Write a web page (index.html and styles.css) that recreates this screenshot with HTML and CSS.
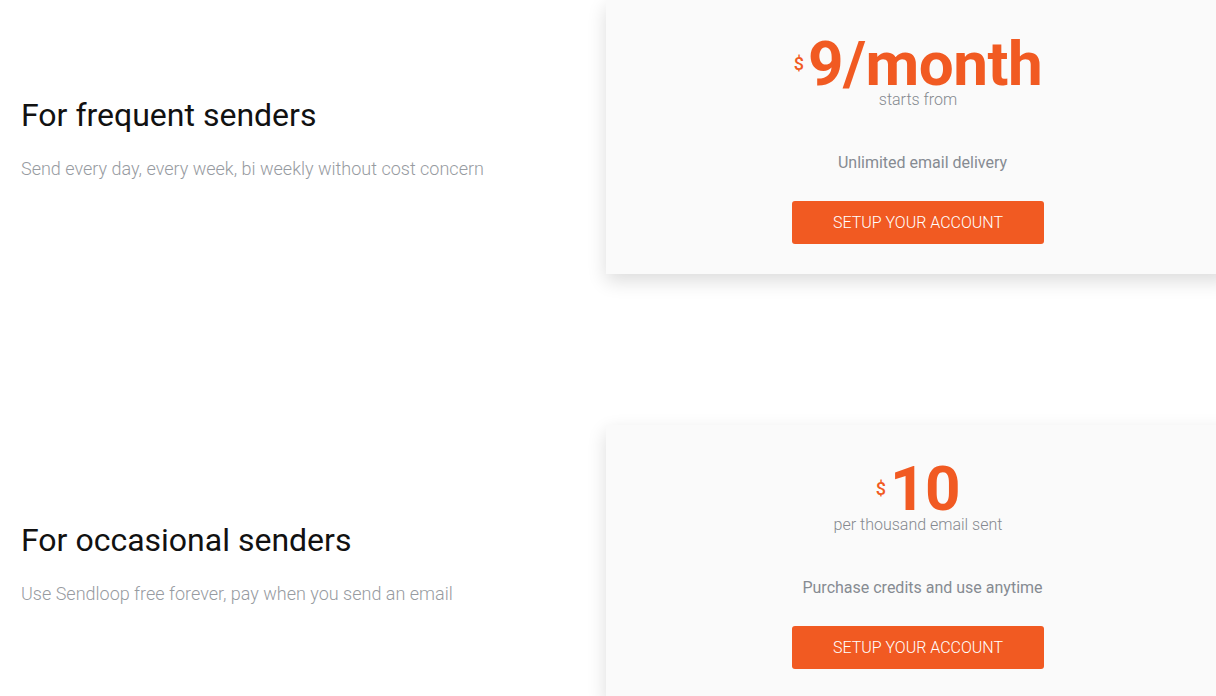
FILE: index.html
```html
<!DOCTYPE html>
<html lang="en">
<head>
<meta charset="utf-8">
<title>Pricing</title>
<link rel="stylesheet" href="styles.css">
</head>
<body>
<main class="plans">
  <section class="plan">
    <div class="plan-info">
      <h2 class="plan-title">For frequent senders</h2>
      <p class="plan-desc">Send every day, every week, bi weekly without cost concern</p>
    </div>
    <div class="card">
      <div class="price"><span class="currency">$</span><span class="amount">9/month</span></div>
      <div class="price-note">starts from</div>
      <div class="feature">Unlimited email delivery</div>
      <a class="btn" href="#">SETUP YOUR ACCOUNT</a>
    </div>
  </section>
  <section class="plan">
    <div class="plan-info">
      <h2 class="plan-title">For occasional senders</h2>
      <p class="plan-desc">Use Sendloop free forever, pay when you send an email</p>
    </div>
    <div class="card">
      <div class="price"><span class="currency">$</span><span class="amount">10</span></div>
      <div class="price-note">per thousand email sent</div>
      <div class="feature">Purchase credits and use anytime</div>
      <a class="btn" href="#">SETUP YOUR ACCOUNT</a>
    </div>
  </section>
</main>
</body>
</html>
```

FILE: styles.css
```css
html, body {
  margin: 0;
  padding: 0;
  background: #ffffff;
  overflow: hidden;
}

body {
  font-family: Roboto, "Liberation Sans", Arial, sans-serif;
  width: 1216px;
  height: 696px;
}

.plans {
  display: flex;
  flex-direction: column;
  gap: 151px;
}

.plan {
  display: flex;
  align-items: stretch;
  height: 274px;
}

.plan-info {
  width: 606px;
  flex: none;
  box-sizing: border-box;
  padding: 3px 0 0 21px;
  display: flex;
  flex-direction: column;
  justify-content: center;
}

.plan-title {
  margin: 0;
  font-size: 32px;
  line-height: 38px;
  font-weight: 400;
  color: #111111;
}

.plan-desc {
  margin: 21px 0 0;
  font-size: 18px;
  line-height: 27px;
  font-weight: 300;
  color: #979ba1;
}

.card {
  width: 624px;
  flex: none;
  box-sizing: border-box;
  background: #fafafa;
  box-shadow: 0 7px 18px rgba(0, 0, 0, 0.14);
  padding: 35px 0 30px;
  display: flex;
  flex-direction: column;
  align-items: center;
}

.price {
  display: flex;
  align-items: flex-start;
  color: #f15a22;
  line-height: 58px;
  height: 58px;
}

.currency {
  font-size: 18px;
  line-height: 18px;
  font-weight: 500;
  margin: 20px 4px 0 0;
}

.amount {
  font-size: 62px;
  font-weight: 700;
  letter-spacing: -0.5px;
}

.price-note {
  margin-top: -3px;
  font-size: 16px;
  line-height: 19px;
  font-weight: 300;
  color: #85898f;
}

.feature {
  margin-top: 44px;
  padding-left: 9px;
  font-size: 16px;
  line-height: 19px;
  font-weight: 400;
  color: #868b92;
}

.btn {
  margin-top: 29px;
  width: 252px;
  height: 44px;
  box-sizing: border-box;
  border-radius: 3px;
  background: #f15a22;
  color: #ffffff;
  text-decoration: none;
  font-size: 16px;
  font-weight: 300;
  display: flex;
  align-items: center;
  justify-content: center;
}
```
